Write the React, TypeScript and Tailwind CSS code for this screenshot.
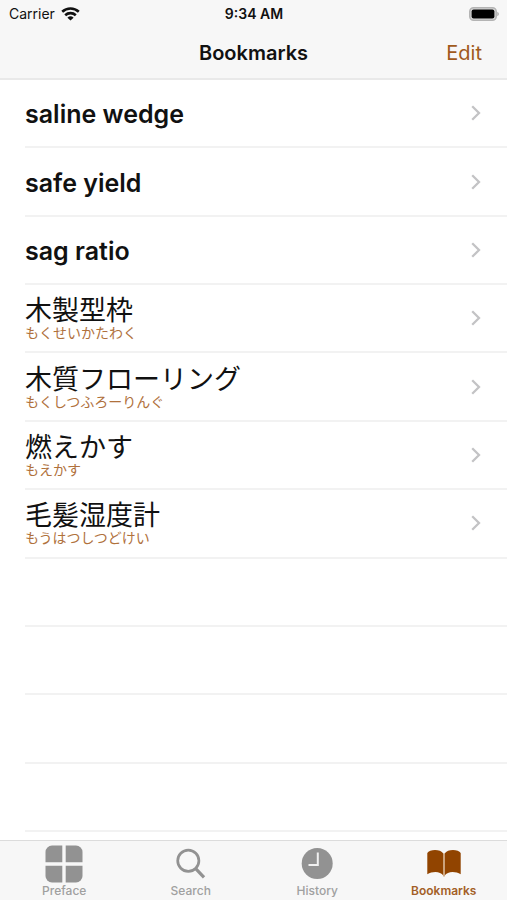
type Entry = { term: string; reading?: string };

const entries: Entry[] = [
  { term: "saline wedge" },
  { term: "safe yield" },
  { term: "sag ratio" },
  { term: "木製型枠", reading: "もくせいかたわく" },
  { term: "木質フローリング", reading: "もくしつふろーりんぐ" },
  { term: "燃えかす", reading: "もえかす" },
  { term: "毛髪湿度計", reading: "もうはつしつどけい" },
];

const emptyRows = [0, 1, 2, 3];

function WifiIcon() {
  return (
    <svg width="19" height="14" viewBox="0 0 19 14" fill="none" stroke="#111" strokeWidth="2.6" aria-hidden="true">
      <path d="M1.200 4.700a12.200 12.200 0 0 1 16.600 0" />
      <path d="M4.200 8.200a7.800 7.800 0 0 1 10.600 0" />
      <path d="M9.500 13.600 6.400 10.700a4.500 4.500 0 0 1 6.200 0z" fill="#111" stroke="none" />
    </svg>
  );
}

function BatteryIcon() {
  return (
    <svg width="30" height="14" viewBox="0 0 30 14" aria-hidden="true">
      <rect x="0.8" y="0.8" width="26.400" height="12.400" rx="3.800" fill="#d8d8d8" stroke="#b4b4b4" strokeWidth="1.600" />
      <rect x="2.600" y="2.400" width="22.800" height="9.200" rx="2" fill="#000" />
      <path d="M28.300 4.800c2 .8 2 3.600 0 4.400z" fill="#a9a9a9" />
    </svg>
  );
}

function Chevron() {
  return (
    <svg className="shrink-0" width="10" height="16" viewBox="0 0 10 16" fill="none" stroke="#c3c3c5" strokeWidth="2.300" aria-hidden="true">
      <path d="M1.200 1.200 8 8l-6.800 6.800" />
    </svg>
  );
}

function PrefaceIcon() {
  return (
    <svg width="38" height="38" viewBox="0 0 38 38" fill="#929292" aria-hidden="true">
      <path d="M7 .5h10.300v16.800H.5V7A6.500 6.500 0 0 1 7 .5z" />
      <path d="M31 .5H20.700v16.800h16.800V7A6.500 6.500 0 0 0 31 .5z" />
      <path d="M7 37.500h10.300V20.700H.5V31A6.500 6.500 0 0 0 7 37.500z" />
      <path d="M31 37.500H20.700V20.700h16.800V31a6.500 6.500 0 0 1-6.500 6.500z" />
    </svg>
  );
}

function SearchIcon() {
  return (
    <svg width="38" height="38" viewBox="0 0 38 38" fill="none" stroke="#929292" aria-hidden="true">
      <circle cx="16.300" cy="15.800" r="10.600" strokeWidth="2.700" />
      <path d="m23.700 23.600 8.300 8.700" strokeWidth="3.200" />
    </svg>
  );
}

function HistoryIcon() {
  return (
    <svg width="38" height="38" viewBox="0 0 38 38" aria-hidden="true">
      <circle cx="19.200" cy="18.500" r="15.500" fill="#929292" />
      <path d="M19.800 7.500v12.600H10.500" fill="none" stroke="#f0f0f0" strokeWidth="2" />
    </svg>
  );
}

function BookIcon() {
  return (
    <svg width="38" height="38" viewBox="0 0 38 38" aria-hidden="true">
      <path d="M2.300 8C4.500 4.200 15.500 3.800 18.300 8.500v22C15.500 26 7.500 25.800 2.300 29.300z" fill="#914400" />
      <path d="M35.700 8C33.500 4.200 22.500 3.800 19.700 8.500v22c2.800-4.500 10.800-4.700 16-1.200z" fill="#914400" />
      <path d="M19 8.500v23" stroke="#c99b70" strokeWidth="1.600" />
    </svg>
  );
}

const tabs = [
  { label: "Preface", Icon: PrefaceIcon, active: false },
  { label: "Search", Icon: SearchIcon, active: false },
  { label: "History", Icon: HistoryIcon, active: false },
  { label: "Bookmarks", Icon: BookIcon, active: true },
];

export default function App() {
  return (
    <div className="flex min-h-screen flex-col bg-white font-['Inter','Noto_Sans_CJK_JP',sans-serif] text-[#111]">
      <header className="border-b-2 border-[#e9e9e9] bg-[#f7f7f7]">
        <div className="grid h-7 grid-cols-3 items-center pr-2 pl-[9px] text-[14px] leading-5">
          <div className="flex items-center gap-1.5">
            <span>Carrier</span>
            <WifiIcon />
          </div>
          <time className="text-center font-semibold">9:34 AM</time>
          <div className="flex justify-end">
            <BatteryIcon />
          </div>
        </div>
        <div className="grid h-[50px] grid-cols-3 items-center px-[25px] text-[20px] leading-6">
          <h1 className="col-start-2 text-center font-semibold">Bookmarks</h1>
          <button type="button" className="justify-self-end text-[#a05a1c]">
            Edit
          </button>
        </div>
      </header>

      <main className="flex flex-1 flex-col pb-2">
        <ul className="grid flex-1 auto-rows-fr pl-[25px]">
          {entries.map(({ term, reading }) => (
            <li key={term} className="border-b-2 border-[#f2f2f2]">
              <a href="#" className="flex h-full items-center justify-between pr-[26px]">
                {reading ? (
                  <span className="flex flex-col pt-0.5">
                    <span className="text-[27px] leading-7">{term}</span>
                    <span className="text-[14px] leading-4 text-[#b0713c]">{reading}</span>
                  </span>
                ) : (
                  <span className="pt-0.5 text-[25px] leading-8 font-semibold">{term}</span>
                )}
                <Chevron />
              </a>
            </li>
          ))}
          {emptyRows.map((row) => (
            <li key={row} className="border-b-2 border-[#f2f2f2]" />
          ))}
        </ul>
      </main>

      <nav className="grid h-[60px] grid-cols-4 border-t border-[#dcdcdc] bg-[#f7f7f7] pl-px">
        {tabs.map(({ label, Icon, active }) => (
          <button
            key={label}
            type="button"
            aria-current={active ? "page" : undefined}
            className={
              active
                ? "flex flex-col items-center pt-1 text-[12px] leading-4 font-semibold text-[#a35f27]"
                : "flex flex-col items-center pt-1 text-[12px] leading-4 font-medium text-[#a0a0a0]"
            }
          >
            <Icon />
            {label}
          </button>
        ))}
      </nav>
    </div>
  );
}
